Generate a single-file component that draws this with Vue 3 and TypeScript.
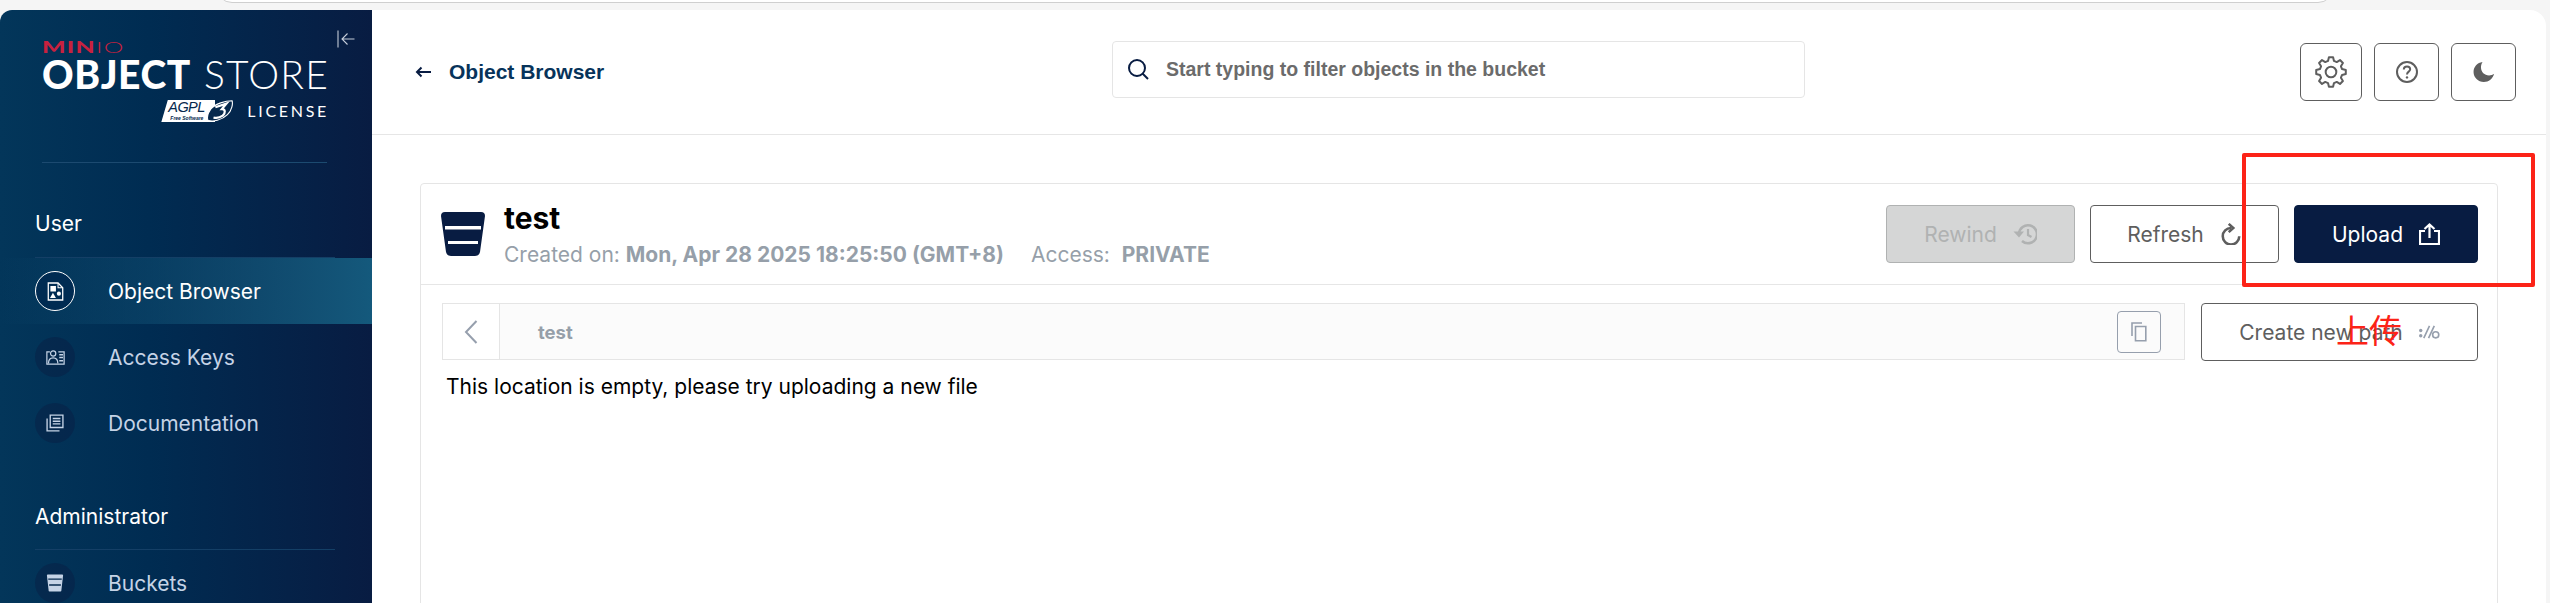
<script setup lang="ts">
const userNav = [
  { label: 'Object Browser', icon: 'browser', active: true },
  { label: 'Access Keys', icon: 'keys', active: false },
  { label: 'Documentation', icon: 'docs', active: false },
]

function gearPath(): string {
  const pts: string[] = []
  const polar = (r: number, deg: number) => {
    const a = (deg * Math.PI) / 180
    return `${(12 + r * Math.cos(a)).toFixed(2)} ${(12 + r * Math.sin(a)).toFixed(2)}`
  }
  for (let i = 0; i < 8; i++) {
    const c = i * 45 - 90
    pts.push(polar(8.6, c - 15), polar(11.2, c - 8), polar(11.2, c + 8), polar(8.6, c + 15))
  }
  return 'M' + pts.join('L') + 'Z'
}
const gear = gearPath()
</script>

<template>
  <div class="page">
    <div class="window">
      <aside class="sidebar">
        <div class="brand">
          <div class="brand-text">
            <div class="minio"><b>MIN</b><span>IO</span></div>
            <div class="store"><b>OBJECT</b><span>STORE</span></div>
            <div class="license-row">
              <div class="agpl">
                <div class="agpl-plate"><span class="agpl-word">AGPL</span><span class="agpl-free">Free Software</span></div>
                <svg class="agpl-three" viewBox="0 0 28 24">
                  <path d="M1 22C6 24 16 22 22 16C27 11 28 4 27 1C20 1 9 4 4 10C1 14 0 19 1 22Z" fill="#06294d" stroke="#fff" stroke-width="1.2" />
                  <path d="M9 8L21 4L16 10C20 10 20 14 17 17C14 19 10 20 7 19" fill="none" stroke="#fff" stroke-width="2.4" />
                </svg>
              </div>
              <span class="license">LICENSE</span>
            </div>
          </div>
          <svg class="collapse" viewBox="0 0 18 18" fill="none" stroke="#c4ccd8" stroke-width="1.1">
            <path d="M1 0.5V17.5M17.5 9H5M10.5 3.5L5 9L10.5 14.5" />
          </svg>
        </div>

        <nav class="nav">
          <div class="nav-title">User</div>
          <div v-for="item in userNav" :key="item.label" class="nav-item" :class="{ active: item.active }">
            <span class="nav-icon">
              <svg v-if="item.icon === 'browser'" viewBox="0 0 20 22" width="17" height="19">
                <path fill="none" stroke="#fff" stroke-width="1.500" d="M1.500 1H13L18.500 6.500V21H1.500Z" />
                <path fill="none" stroke="#fff" stroke-width="1.200" d="M13 1V6.500H18.500" />
                <rect x="4" y="4.500" width="6.500" height="6.500" fill="#fff" />
                <path fill="#fff" d="M7 12.500L10.500 18.500H3.500Z" />
                <circle cx="14" cy="13.500" r="2.400" fill="#fff" />
              </svg>
              <svg v-else-if="item.icon === 'keys'" viewBox="0 0 20 16" width="19" height="15" fill="none" stroke="#c5d3e6" stroke-width="1.300">
                <path d="M4 2H0.800V15H19.200V2H13" />
                <circle cx="7.500" cy="3.800" r="2.800" />
                <path d="M2.500 14.500C2.500 10.500 4.500 8.500 7.500 8.500C10.500 8.500 12.500 10.500 12.500 14.500" />
                <path d="M14 5H18M14 8H18M14 11.500H18" stroke-width="1.700" />
              </svg>
              <svg v-else viewBox="0 0 20 20" width="18" height="18" fill="none" stroke="#c5d3e6" stroke-width="1.500">
                <path d="M4.700 1.200H18.800V15H4.700Z" />
                <path d="M7.500 5H16M7.500 8H16M7.500 11H16" />
                <path d="M1.200 5V18.800H15" />
              </svg>
            </span>
            <span class="nav-label">{{ item.label }}</span>
          </div>

          <div class="nav-title admin">Administrator</div>
          <div class="nav-item">
            <span class="nav-icon">
              <svg viewBox="0 0 20 20" width="18" height="18">
                <path fill="#c5d3e6" d="M1 1.500Q1 0.500 2 0.500H18Q19 0.500 19 1.500L17 19Q17 19.500 16 19.500H4Q3 19.500 3 19L1 1.500ZM2.500 5V6.500H17.500V5ZM3.500 11.500V13H16.500V11.500Z" fill-rule="evenodd" />
              </svg>
            </span>
            <span class="nav-label">Buckets</span>
          </div>
        </nav>
      </aside>

      <main class="main">
        <header class="topbar">
          <div class="crumb">
            <svg class="back" viewBox="0 0 16 12" fill="none" stroke="#081c42" stroke-width="2">
              <path d="M16 6H2M6.500 1.500L2 6L6.500 10.500" />
            </svg>
            <span>Object Browser</span>
          </div>
          <div class="search">
            <svg viewBox="0 0 22 22" fill="none" stroke="#081c42" stroke-width="2" class="search-icon">
              <circle cx="10" cy="10" r="8" />
              <path d="M15.500 15.500L21 21" />
            </svg>
            <span>Start typing to filter objects in the bucket</span>
          </div>
          <div class="tools">
            <button class="tool gear">
              <svg viewBox="0 0 24 24" width="32" height="32" fill="none" stroke="#5e5e5e" stroke-width="1.500" stroke-linejoin="round">
                <circle cx="12" cy="12" r="4" />
                <path :d="gear" />
              </svg>
            </button>
            <button class="tool help">
              <svg viewBox="0 0 24 24" width="24" height="24" fill="none" stroke="#5e5e5e" stroke-width="2">
                <circle cx="12" cy="12" r="10" />
                <path d="M8.800 9.600C8.800 7.600 10.200 6.500 12 6.500C13.900 6.500 15.200 7.600 15.200 9.300C15.200 11.700 12 11.600 12 14.400" />
                <circle cx="12" cy="17.400" r="1.200" fill="#5e5e5e" stroke="none" />
              </svg>
            </button>
            <button class="tool moon">
              <svg viewBox="0 0 24 24" width="22" height="22">
                <path fill="#5e5e5e" d="M10.400 1.200C4.800 1.900 0.600 6.500 0.600 12C0.600 18 5.600 23 11.800 23C17.200 23 21.800 19.200 23 14C21.500 15.200 19.600 15.900 17.500 15.900C12.600 15.900 8.700 12 8.700 7.200C8.700 5 9.300 3 10.400 1.200Z" />
              </svg>
            </button>
          </div>
        </header>

        <section class="content">
          <div class="panel">
            <div class="bucket-head">
              <svg class="bucket-icon" viewBox="0 0 44 44">
                <path fill="#081c42" fill-rule="evenodd" d="M0 4Q0 0 4 0H40Q44 0 44 4L39 40Q38 44 34 44H10Q6 44 5 40ZM4 14V17.500H40V14ZM7 29V32H37V29Z" />
              </svg>
              <div class="bucket-info">
                <h1>test</h1>
                <p>Created on: <b>Mon, Apr 28 2025 18:25:50 (GMT+8)</b><span class="access">Access: <b>PRIVATE</b></span></p>
              </div>
              <div class="head-actions">
                <button class="btn disabled">
                  Rewind
                  <svg viewBox="0 0 24 22" width="24" height="22" fill="none" stroke="#b0b2b2" stroke-width="2.600">
                    <path d="M6 11A9 9 0 1 1 9 18" />
                    <path d="M0.500 8.500H11L6 14.500Z" fill="#b0b2b2" stroke="none" />
                    <path d="M15 6V12L18.500 14" stroke-width="2.200" />
                  </svg>
                </button>
                <button class="btn">
                  Refresh
                  <svg viewBox="0 0 24 24" width="22" height="22" fill="none" stroke="#5e5e5e" stroke-width="2.800">
                    <path d="M12 5.500A9 9 0 1 0 21 14.500" />
                    <path d="M9.500 1L14.500 5.500L9.500 10" />
                  </svg>
                </button>
                <button class="btn primary">
                  Upload
                  <svg viewBox="0 0 21 22" width="21" height="22" fill="none" stroke="#fff" stroke-width="2.200">
                    <path d="M6 8H1V21H20V8H15" />
                    <path d="M10.500 15V1.500M5.500 6L10.500 1.500L15.500 6" />
                  </svg>
                </button>
              </div>
            </div>

            <div class="path-row">
              <div class="path-bar">
                <div class="path-back">
                  <svg viewBox="0 0 14 24" width="14" height="24" fill="none" stroke="#969fad" stroke-width="2"><path d="M12.500 1L2 12L12.500 23" /></svg>
                </div>
                <span class="path-name">test</span>
                <button class="copy">
                  <svg viewBox="0 0 16 20" width="16" height="20" fill="none" stroke="#969fad" stroke-width="1.600">
                    <path d="M1 14V1H11" />
                    <path d="M4.500 4.500H14.800V18.800H4.500Z" />
                  </svg>
                </button>
              </div>
              <button class="btn new-path">
                Create new path
                <svg viewBox="0 0 22 14" width="21" height="14" fill="none" stroke="#969fad" stroke-width="1.700">
                  <circle cx="1.800" cy="5.500" r="1.800" fill="#969fad" stroke="none" />
                  <circle cx="1.800" cy="11" r="1.800" fill="#969fad" stroke="none" />
                  <path d="M5 13.500L11 0.500M10 13.500L16 0.500" />
                  <circle cx="17.500" cy="10" r="3.200" />
                </svg>
              </button>
            </div>
            <p class="empty">This location is empty, please try uploading a new file</p>
          </div>
        </section>
      </main>
    </div>

    <div class="mark" aria-hidden="true"></div>
    <div class="mark-label">上传</div>
    <div class="url-bar"></div>
  </div>
</template>

<style>
html, body { margin: 0; background: #f5f5f5; }
</style>

<style scoped>
.page {
  position: relative;
  width: 2550px;
  height: 603px;
  overflow: hidden;
  background: #f5f5f5;
  font-family: Inter, "Liberation Sans", sans-serif;
}
.url-bar {
  position: absolute;
  left: 216px;
  top: -30px;
  width: 2118px;
  height: 33px;
  background: #fff;
  border: 1.500px solid #cfcfcf;
  border-radius: 16px;
  box-sizing: border-box;
}
.window {
  display: flex;
  box-sizing: border-box;
  height: 593px;
  margin: 10px 4px 0 0;
  border-radius: 12px 16px 0 0;
  overflow: hidden;
}
.sidebar {
  flex: 0 0 372px;
  background: linear-gradient(90deg, #03365a 0%, #002c52 40%, #081c42 100%);
  color: #fff;
}
.brand {
  display: flex;
  justify-content: space-between;
  padding: 20px 17px 0 42px;
  height: 133px;
  box-sizing: content-box;
}
.brand-text {
  width: 285px;
  height: 133px;
  border-bottom: 1px solid #1c4a70;
  box-sizing: border-box;
}
.minio {
  font-family: Lato, sans-serif;
  font-size: 16px;
  line-height: 16px;
  letter-spacing: 0.8px;
  color: #c8213f;
  margin-top: 9px;
  transform: scaleX(1.55);
  transform-origin: left center;
}
.minio b { font-weight: 900; }
.minio span { font-weight: 300; }
.store {
  display: flex;
  justify-content: space-between;
  font-family: Lato, sans-serif;
  font-size: 39px;
  line-height: 36px;
  white-space: nowrap;
  margin-top: 1px;
}
.store b { font-weight: 900; letter-spacing: 0.6px; }
.store span { font-weight: 300; letter-spacing: 1.200px; margin-right: -2px; }
.license-row {
  display: flex;
  justify-content: flex-end;
  align-items: center;
  gap: 14px;
  margin-top: 7px;
}
.agpl {
  position: relative;
  width: 72px;
  height: 24px;
}
.agpl-plate {
  width: 54px;
  height: 22px;
  margin-top: 1px;
  background: #fff;
  clip-path: polygon(12% 0, 100% 0, 100% 100%, 0 100%);
  color: #06294d;
  font-family: "Liberation Sans", sans-serif;
  font-style: italic;
  overflow: hidden;
}
.agpl-word {
  display: block;
  font-size: 14.500px;
  line-height: 15px;
  letter-spacing: -0.6px;
  padding-left: 7px;
}
.agpl-free {
  display: block;
  font-size: 5px;
  line-height: 6px;
  font-weight: 700;
  padding-left: 9px;
}
.agpl-three {
  position: absolute;
  right: 0;
  top: 0;
  width: 26px;
  height: 24px;
}
.license {
  font-family: Lato, sans-serif;
  font-size: 16px;
  letter-spacing: 2.700px;
  line-height: 16px;
  margin-right: -2px;
}
.collapse {
  width: 18px;
  height: 18px;
}
.nav-title {
  margin: 50px 37px 0 35px;
  padding-bottom: 22px;
  height: 22px;
  font-size: 21px;
  line-height: 22px;
  border-bottom: 1px solid #143f66;
  color: #fff;
}
.nav-title.admin { margin-top: 50px; padding-bottom: 21px; }
.nav-item {
  display: flex;
  align-items: center;
  height: 66px;
  padding-left: 35px;
  color: #c5d3e6;
  font-size: 21px;
}
.nav-item.active {
  color: #fff;
  background: linear-gradient(90deg, rgba(21, 91, 126, 0) 0%, #14597c 100%);
}
.nav-icon {
  display: flex;
  align-items: center;
  justify-content: center;
  width: 40px;
  height: 40px;
  border-radius: 50%;
  background: rgba(8, 28, 66, 0.45);
  box-sizing: border-box;
  margin-right: 33px;
}
.active .nav-icon {
  background: #002b52;
  border: 1px solid #fff;
}
.main {
  flex: 1;
  min-width: 0;
  background: #fff;
}
.topbar {
  display: flex;
  align-items: center;
  box-sizing: border-box;
  height: 125px;
  padding: 0 30px 0 43px;
  border-bottom: 1px solid #e6e6e6;
}
.crumb {
  display: flex;
  align-items: center;
  gap: 18px;
  width: 697px;
  font-family: "Liberation Sans", sans-serif;
  font-weight: 700;
  font-size: 21px;
  color: #07335a;
}
.back { width: 16px; height: 12px; }
.search {
  display: flex;
  align-items: center;
  gap: 17px;
  box-sizing: border-box;
  width: 693px;
  height: 57px;
  padding: 0 14px;
  margin-bottom: 6px;
  border: 1px solid #e5e5e5;
  border-radius: 4px;
  font-family: "Liberation Sans", sans-serif;
  font-weight: 700;
  font-size: 19.500px;
  color: #6b6b6b;
}
.search-icon { width: 22px; height: 22px; }
.tools {
  display: flex;
  gap: 12px;
  margin-left: auto;
}
.tool {
  display: flex;
  align-items: center;
  justify-content: center;
  box-sizing: border-box;
  height: 58px;
  padding: 0;
  background: #fff;
  border: 1.500px solid #5e5e5e;
  border-radius: 6px;
}
.gear { width: 62px; }
.help, .moon { width: 65px; }
.content {
  padding: 48px 48px 0 48px;
}
.panel {
  border: 1px solid #e5e5e5;
  border-radius: 4px;
  min-height: 500px;
}
.bucket-head {
  display: flex;
  align-items: center;
  box-sizing: border-box;
  height: 101px;
  padding: 0 19px 0 20px;
  border-bottom: 1px solid #e6e6e6;
}
.bucket-icon {
  width: 44px;
  height: 44px;
  margin-right: 19px;
}
.bucket-info h1 {
  margin: 0 0 4px;
  font-size: 30px;
  line-height: 38px;
  font-weight: 700;
  color: #000;
}
.bucket-info p {
  margin: 0;
  font-size: 21px;
  line-height: 28px;
  color: #969fa9;
}
.bucket-info b { font-weight: 700; }
.access { margin-left: 27px; }
.access b { margin-left: 6px; }
.head-actions {
  display: flex;
  gap: 15px;
  margin-left: auto;
}
.btn {
  display: flex;
  align-items: center;
  justify-content: center;
  gap: 16px;
  box-sizing: border-box;
  width: 189px;
  height: 58px;
  padding: 0;
  background: #fff;
  border: 1.500px solid #5e5e5e;
  border-radius: 4px;
  font-family: Inter, sans-serif;
  font-size: 21px;
  color: #5e5e5e;
}
.btn.disabled {
  background: #d5d6d6;
  border-color: #b0b2b2;
  color: #b0b2b2;
}
.btn.primary {
  width: 184px;
  background: #081c42;
  border-color: #081c42;
  color: #fff;
}
.path-row {
  display: flex;
  align-items: flex-start;
  gap: 16px;
  padding: 18px 19px 0 21px;
}
.path-bar {
  flex: 1;
  display: flex;
  align-items: center;
  box-sizing: border-box;
  height: 57px;
  background: #fbfbfb;
  border: 1px solid #e5e5e5;
}
.path-back {
  display: flex;
  align-items: center;
  justify-content: center;
  width: 57px;
  height: 100%;
  background: #fff;
  border-right: 1px solid #e5e5e5;
  box-sizing: border-box;
}
.path-name {
  margin-left: 38px;
  font-size: 18.500px;
  font-weight: 700;
  color: #969fa9;
}
.copy {
  display: flex;
  align-items: center;
  justify-content: center;
  box-sizing: border-box;
  width: 44px;
  height: 42px;
  padding: 0;
  margin: 0 23px 0 auto;
  background: transparent;
  border: 1px solid #969fad;
  border-radius: 4px;
}
.new-path {
  flex: 0 0 277px;
}
.empty {
  margin: 13px 0 0 25px;
  font-size: 21px;
  line-height: 26px;
  color: #000;
}
.mark {
  position: absolute;
  left: 2242px;
  top: 153px;
  width: 293px;
  height: 134px;
  box-sizing: border-box;
  border: 4px solid #fc2317;
  border-radius: 2px;
}
.mark-label {
  position: absolute;
  left: 2336px;
  top: 307px;
  font-family: "Noto Sans CJK SC", sans-serif;
  font-size: 33px;
  line-height: 44px;
  font-weight: 400;
  color: #fc2317;
}
</style>
